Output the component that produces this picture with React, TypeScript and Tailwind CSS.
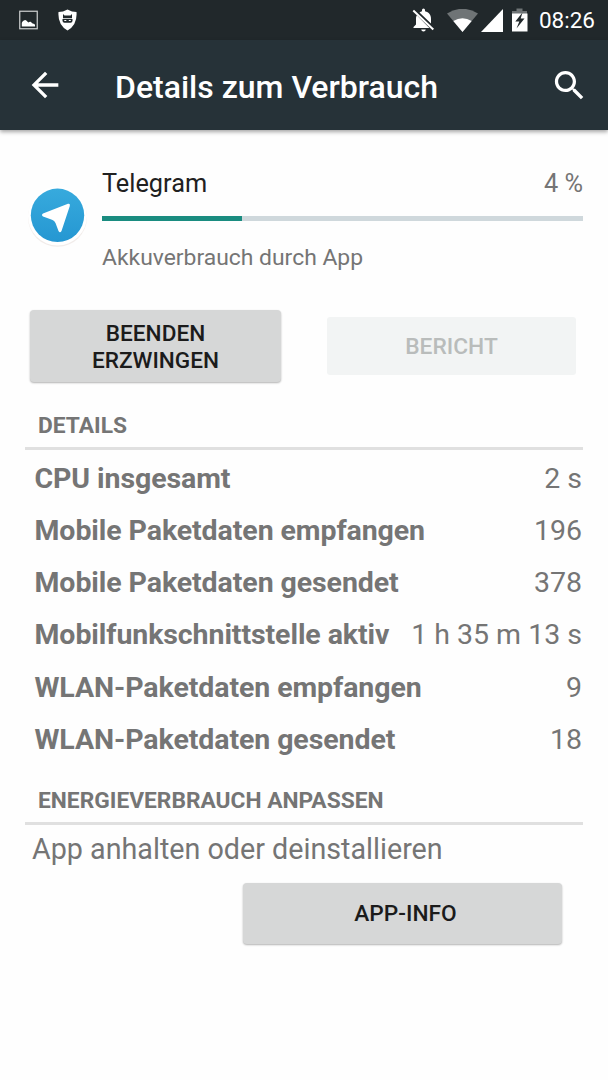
interface DetailRowProps {
  label: string;
  value: string;
}

const details: DetailRowProps[] = [
  { label: "CPU insgesamt", value: "2 s" },
  { label: "Mobile Paketdaten empfangen", value: "196" },
  { label: "Mobile Paketdaten gesendet", value: "378" },
  { label: "Mobilfunkschnittstelle aktiv", value: "1 h 35 m 13 s" },
  { label: "WLAN-Paketdaten empfangen", value: "9" },
  { label: "WLAN-Paketdaten gesendet", value: "18" },
];

function StatusBar() {
  return (
    <div className="flex h-10 items-center bg-[#21282b] pl-[19px] pr-[13px] text-white">
      <svg width="19" height="20" viewBox="0 0 19 20">
        <rect x="0.75" y="1.25" width="17.5" height="17.5" fill="none" stroke="#c9cbcc" strokeWidth="1.25" />
        <path d="M2.800 16.500v-3.500q0-1.500 2-2.500 1.500-1 2.500 0l2 2q1-1 2.300-.8l2 1.800q2.400.2 2.400 1.500v1.500z" fill="#fff" />
      </svg>
      <svg className="ml-5" width="19" height="22" viewBox="0 0 19 22">
        <path d="M9.500 0.500 Q14 3 18.500 3 Q19.500 16 9.500 21.500 Q-0.500 16 0.500 3 Q5 3 9.500 0.500z" fill="#fff" />
        <path d="M5 5l1.500 1.500h6L14 5v4.200H5z M4.500 10h10v1.800a2 2 0 0 1-2 2h-6a2 2 0 0 1-2-2z" fill="#21282b" />
        <path d="M6.300 11h2v1h-2z M10.800 11h2v1h-2z" fill="#fff" />
      </svg>
      <svg className="ml-auto" width="23" height="24" viewBox="0 0 23 24">
        <path d="M11.500 23.500a2.300 2.300 0 0 0 2.300-2h-4.600a2.300 2.300 0 0 0 2.300 2z M7.500 4.400Q8.700 3.500 10 3.200V2a1.500 1.500 0 0 1 3 0v1.200c4 .9 6 4 6 7.700v4.600z M4.900 7.200C4 8.600 4 10 4 11v5.500L1.500 19v1h15.900z" fill="#fff" />
        <path d="M1.300 2.500l20 19" stroke="#fff" strokeWidth="2" />
      </svg>
      <svg className="ml-3" width="31" height="23" viewBox="0 0 31 23">
        <path d="M15.500 23L0 4.500Q15.500-5 31 4.500z" fill="#6f7476" />
        <path d="M15.500 23L6.300 12Q15.500 6.500 24.700 12z" fill="#fff" />
      </svg>
      <svg className="ml-[3px]" width="22" height="23" viewBox="0 0 22 23">
        <path d="M0 23L22 0v23z" fill="#fff" />
      </svg>
      <svg className="ml-2 mr-px" width="17" height="24" viewBox="0 0 17 24">
        <path d="M1 6V3h4.500V0.500h6V3h4.500v3z" fill="#6f7476" />
        <path d="M1 5.500h15.500v18h-15.500z" fill="#fff" />
        <path d="M11.500 4.500L4.300 13.500h4L5.500 20.500l8-10H9.700z" fill="#21282b" />
      </svg>
      <span className="ml-[10px] text-[22.500px] leading-10">08:26</span>
    </div>
  );
}

function Toolbar() {
  return (
    <header className="flex h-[90px] items-center bg-[#263238] pl-[25px] pr-[18px] text-white shadow-[0_2px_4px_rgba(0,0,0,0.35)]">
      <svg width="40" height="40" viewBox="0 0 24 24" fill="currentColor">
        <path d="M20 11H7.830l5.590-5.590L12 4l-8 8 8 8 1.410-1.410L7.830 13H20v-2z" />
      </svg>
      <h1 className="ml-[50px] pt-[3px] text-[32px] leading-[38px] font-medium">Details zum Verbrauch</h1>
      <svg className="mr-px ml-auto" width="39" height="39" viewBox="0 0 24 24" fill="currentColor">
        <path d="M15.500 14h-.79l-.28-.27C15.410 12.590 16 11.110 16 9.500 16 5.910 13.090 3 9.500 3S3 5.910 3 9.500 5.910 16 9.500 16c1.610 0 3.090-.59 4.230-1.570l.27.28v.79l5 4.990L20.490 19l-4.990-5zm-6 0C7.010 14 5 11.990 5 9.500S7.010 5 9.500 5 14 7.010 14 9.500 11.990 14 9.500 14z" />
      </svg>
    </header>
  );
}

function TelegramIcon() {
  return (
    <svg width="60" height="62" viewBox="0 0 60 62" className="mt-[26px] shrink-0">
      <defs>
        <linearGradient id="sky" x1="0" y1="0" x2="0" y2="1">
          <stop offset="0" stopColor="#37aadd" />
          <stop offset="1" stopColor="#2597d2" />
        </linearGradient>
      </defs>
      <circle cx="30.500" cy="31.300" r="29.500" fill="#f1ecea" />
      <circle cx="30.500" cy="30" r="29.500" fill="#fff" />
      <circle cx="30.500" cy="29.300" r="26.700" fill="url(#sky)" />
      <path d="M16 27.500L41 17.800Q43.500 17.300 42.800 20L34.500 45Q33 47.500 31.500 45L28.500 37Q27.500 34.800 25 33.800L16 30.500Q14 29 16 27.500z" fill="#fff" />
    </svg>
  );
}

function SectionTitle({ title }: { title: string }) {
  return (
    <h2 className="h-[38px] border-b-3 border-[#e0e0e0] pl-[13px] text-[22.750px] leading-[28px] font-bold text-[#757575]">
      {title}
    </h2>
  );
}

function DetailRow({ label, value }: DetailRowProps) {
  return (
    <div className="flex h-[52.250px] items-center justify-between pr-px pl-[9.500px] text-[28.500px] text-[#757575]">
      <span className="font-bold tracking-[-0.08px]">{label}</span>
      <span>{value}</span>
    </div>
  );
}

export default function App() {
  return (
    <div className="h-[1080px] w-[608px] overflow-hidden bg-[#fefefe] font-['Roboto',sans-serif] whitespace-nowrap">
      <StatusBar />
      <Toolbar />
      <main className="pr-[25px] pl-[25px]">
        <section className="flex h-[180px] gap-[15px] pt-[30px] pl-[2px]">
          <TelegramIcon />
          <div className="flex-1">
            <div className="flex justify-between pt-[8px] text-[25.300px] leading-[32px]">
              <span className="text-[#212121]">Telegram</span>
              <span className="text-[#757575]">4 %</span>
            </div>
            <div className="mt-[16px] h-[5px] bg-[#cfd8dc]">
              <div className="h-full w-[140px] bg-[#1a8c80]" />
            </div>
            <p className="mt-[23px] text-[22.900px] leading-[28px] text-[#757575]">Akkuverbrauch durch App</p>
          </div>
        </section>
        <div className="flex items-center gap-[46px] pl-[5px]">
          <button className="h-[72px] w-[251px] rounded-[4px] bg-[#d6d7d7] pt-px text-[22.600px] leading-[27px] font-medium text-[#1b1b1b] shadow-[0_1px_2px_rgba(0,0,0,0.3)]">
            BEENDEN
            <br />
            ERZWINGEN
          </button>
          <button className="h-[58px] w-[249px] rounded-[3px] bg-[#f2f4f4] pt-0.5 text-[22.750px] font-medium text-[#b9bcbb]" disabled>
            BERICHT
          </button>
        </div>
        <section className="mt-[30px]">
          <SectionTitle title="DETAILS" />
          <div className="pt-[2.750px]">
            {details.map((row) => (
              <DetailRow key={row.label} {...row} />
            ))}
          </div>
        </section>
        <section className="mt-[20.250px]">
          <SectionTitle title="ENERGIEVERBRAUCH ANPASSEN" />
          <p className="mt-[7px] pl-[7px] text-[28.700px] leading-[34px] text-[#757575]">App anhalten oder deinstallieren</p>
          <button className="mt-[17px] ml-[218px] h-[61px] w-[319px] rounded-[4px] bg-[#d6d7d7] pt-0.5 pl-1.5 text-[22.700px] font-medium text-[#1b1b1b] shadow-[0_1px_2px_rgba(0,0,0,0.3)]">
            APP-INFO
          </button>
        </section>
      </main>
    </div>
  );
}
